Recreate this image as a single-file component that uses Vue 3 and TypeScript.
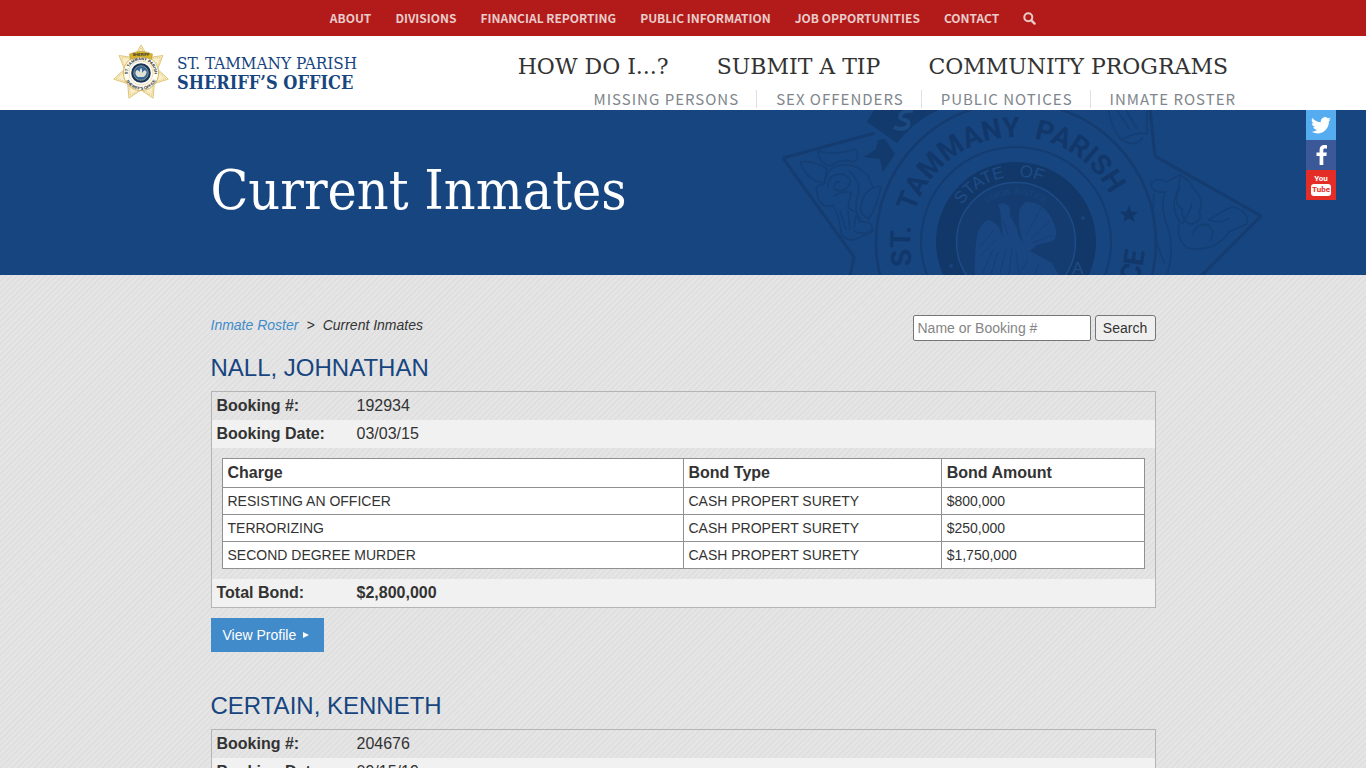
<script setup lang="ts">
interface Charge {
  name: string
  bondType: string
  amount: string
}

interface Inmate {
  name: string
  booking: string
  date: string
  charges: Charge[]
  total: string
}

const topLinks: string[] = [
  'About',
  'Divisions',
  'Financial Reporting',
  'Public Information',
  'Job Opportunities',
  'Contact',
]
const mainLinks: string[] = ['How Do I...?', 'Submit a Tip', 'Community Programs']
const subLinks: string[] = ['Missing Persons', 'Sex Offenders', 'Public Notices', 'Inmate Roster']

const bondType = 'CASH PROPERT SURETY'
const inmates: Inmate[] = [
  {
    name: 'NALL, JOHNATHAN',
    booking: '192934',
    date: '03/03/15',
    charges: [
      { name: 'RESISTING AN OFFICER', bondType, amount: '$800,000' },
      { name: 'TERRORIZING', bondType, amount: '$250,000' },
      { name: 'SECOND DEGREE MURDER', bondType, amount: '$1,750,000' },
    ],
    total: '$2,800,000',
  },
  {
    name: 'CERTAIN, KENNETH',
    booking: '204676',
    date: '09/15/19',
    charges: [],
    total: '',
  },
]

// Outline of the seven-pointed badge, centred on the origin
function starPoints(outer: number, inner: number): string {
  const points: string[] = []
  for (let i = 0; i < 14; i++) {
    const r = i % 2 === 0 ? outer : inner
    const a = (Math.PI * i) / 7 - Math.PI / 2
    points.push(`${(r * Math.cos(a)).toFixed(1)},${(r * Math.sin(a)).toFixed(1)}`)
  }
  return points.join(' ')
}
</script>

<template>
  <nav class="topbar" aria-label="Utility">
    <a v-for="link in topLinks" :key="link" href="#">{{ link }}</a>
    <a href="#" aria-label="Search the site">
      <svg width="13" height="13" viewBox="0 0 13 13" aria-hidden="true">
        <circle cx="5.3" cy="5.3" r="4" fill="none" stroke="currentColor" stroke-width="2" />
        <path d="M8.3 8.3 11.6 11.6" stroke="currentColor" stroke-width="2.4" stroke-linecap="round" />
      </svg>
    </a>
  </nav>

  <header class="masthead">
    <div class="masthead-inner">
      <a class="logo" href="#">
        <svg class="badge" width="56" height="56" viewBox="-28 -28 56 56" aria-hidden="true">
          <defs>
            <path id="badge-top" d="M-12.6 5 A13.4 13.4 0 1 1 12.6 5" />
            <path id="badge-bottom" d="M-14.5 8.5 A16.8 16.8 0 0 0 14.5 8.5" />
          </defs>
          <polygon :points="starPoints(28, 17)" fill="#f8eecb" stroke="#e0c77c" stroke-width="1" />
          <polygon :points="starPoints(25, 16)" fill="none" stroke="#e6d08a" stroke-width="1.4" stroke-dasharray="1 1" />
          <circle r="17.6" fill="#fffdf4" stroke="#d5b95f" stroke-width="1" />
          <circle r="12" fill="none" stroke="#dcc890" stroke-width=".6" />
          <circle r="9.8" fill="#17345c" />
          <circle r="7.3" fill="#35669a" stroke="#c8b878" stroke-width=".6" />
          <path d="M-5.5-1 Q-4-5-1.2-1 Q-1-5 .4-5 Q1.6-3 1 0 Q4-5 5.6-1 Q5 3 2.5 4 H-3 Q-6 2-5.5-1Z" fill="#dfe3d6" />
          <text class="badge-ring"><textPath href="#badge-top" startOffset="50%" text-anchor="middle">ST. TAMMANY PARISH</textPath></text>
          <text class="badge-ring"><textPath href="#badge-bottom" startOffset="50%" text-anchor="middle">SHERIFF'S OFFICE</textPath></text>
          <path d="M-11.5-19 Q0-24 11.5-19 L10.5-13.5 Q0-18.5-10.5-13.5Z" fill="#d9b429" stroke="#a98b2b" stroke-width=".5" />
          <text class="badge-banner" x="0" y="-16.8" text-anchor="middle">SHERIFF</text>
        </svg>
        <span class="logo-text">
          <span>ST. TAMMANY PARISH</span>
          <strong>SHERIFF’S OFFICE</strong>
        </span>
      </a>
      <div class="navs">
        <nav class="main-nav" aria-label="Main">
          <a v-for="link in mainLinks" :key="link" href="#">{{ link }}</a>
        </nav>
        <nav class="sub-nav" aria-label="Secondary">
          <a v-for="link in subLinks" :key="link" href="#">{{ link }}</a>
        </nav>
      </div>
    </div>
  </header>

  <section class="hero">
    <svg class="seal" width="480" height="165" viewBox="782 110 480 165" aria-hidden="true">
      <defs>
        <path id="seal-name" d="M913 268 A106 106 0 1 1 1119 268" />
        <path id="seal-office" d="M1090 347 A129 129 0 0 0 1145 242 V200" />
        <path id="seal-state" d="M950.5 242 A65.5 65.5 0 0 1 1081.5 242" />
        <path id="seal-motto" d="M968 242 A48 48 0 0 1 1064 242" />
      </defs>
      <g fill="none" stroke="#143c71" stroke-width="3">
        <path d="M875 133 783 158 854 257 850 276" />
        <path d="M1150 109 1155 156 1261 216 1201 276" />
        <circle cx="1016" cy="242" r="140" stroke-width="2.5" />
        <circle cx="1016" cy="242" r="95" stroke-width="2" />
      </g>
      <path d="M867 122 874 110H938Q914 121 897 143Z" fill="#133a6d" />
      <path d="M878 140 885 139 895 154 883 172 880 159 864 157 876 149Z" fill="#133a6d" />
      <path d="M913 111Q905 110 901 114Q898 119 905 120Q911 122 907 127Q901 131 894 127" fill="none" stroke="#1c4a82" stroke-width="4" />
      <g fill="none" stroke="#143e74" stroke-width="1.6">
        <path d="M818 151Q835 156 855 149Q861 156 854 162Q840 158 831 166Q818 163 818 151" />
        <path d="M800 162Q815 160 827 169L824 183Q807 181 800 162" />
        <path d="M825 184Q825 169 840 165Q857 163 868 176L873 187" />
        <path d="M828 188Q828 173 842 174Q854 178 848 187Q840 194 834 188Q834 181 840 182" />
        <path d="M849 171Q863 183 857 198Q854 208 860 223" />
        <path d="M824 185Q814 184 817 193Q820 210 833 205L838 216 842 236Q852 243 860 237L874 231" />
        <path d="M834 196Q844 190 851 193L848 208 857 213 862 222Q873 221 872 230Q862 236 854 231" />
        <path d="M881 186Q865 188 862 202Q857 213 869 219Q877 207 881 186" />
        <path d="M840 210 846 230M848 211 850 230M856 215 854 229" />
        <path d="M1152 182Q1159 177 1166 182L1180 175Q1190 180 1193 188Q1206 201 1199 211Q1204 222 1190 224Q1181 220 1182 209Q1174 204 1178 192L1180 177" />
        <path d="M1152 182Q1149 193 1165 192Q1159 207 1169 231Q1174 252 1167 276" />
        <path d="M1180 187Q1168 205 1180 222Q1175 237 1187 248Q1215 253 1229 232L1247 224Q1249 210 1232 207Q1222 211 1209 220Q1222 224 1229 218" />
        <path d="M1192 235Q1197 222 1208 225Q1216 231 1210 241M1182 224Q1190 212 1192 203M1154 194Q1150 235 1165 263" />
        <path d="M1108 110Q1113 130 1121 140Q1136 131 1147 134V110M1121 139Q1135 149 1143 137M1117 110 1130 130M1126 110 1137 129" />
      </g>
      <text class="seal-name"><textPath href="#seal-name" startOffset="3">ST.&#160;&#160;TAMMANY&#160;&#160;PARISH</textPath></text>
      <text class="seal-name"><textPath href="#seal-office" startOffset="80">CE</textPath></text>
      <path d="M1129 205 1131.4 211.5 1138 212 1133 216.2 1134.6 222 1129 218.5 1123.4 222 1125 216.2 1120 212 1126.6 211.5Z" fill="#12376a" />
      <circle cx="1016" cy="242" r="80" fill="#12386a" />
      <circle cx="1016" cy="242" r="59.5" fill="#143c71" stroke="#1e4c86" stroke-width="1.5" />
      <text class="seal-state"><textPath href="#seal-state" startOffset="41%" text-anchor="middle">STATE&#160;&#160;&#160;OF</textPath></text>
      <text class="seal-motto"><textPath href="#seal-motto" startOffset="50%" text-anchor="middle">UNION JUSTICE</textPath></text>
      <g fill="#194680">
        <circle cx="951" cy="266" r="2" />
        <circle cx="1083" cy="218" r="2" />
        <path d="M975 275Q973 224 988 220Q998 221 1003 238L1000 209Q996 203 1003 203Q1012 205 1010 216Q1018 228 1018 235L1023 243Q1013 208 1026 202Q1040 201 1049 214Q1061 233 1053 241L1037 245 1030 251 1052 263 1059 275H982Z" />
      </g>
      <path d="M982 274 993 250M991 274 998 252M1000 274 1006 249M1009 274 1012 248M1019 274 1016 251M1026 235 1041 208M1031 239 1050 221M1032 243 1053 235M980 246 994 230M980 256 997 239M1022 270 1028 260M1035 274 1039 263M1003 219 1008 235" stroke="#153f75" stroke-width="1" />
      <text class="seal-state" x="1072" y="274">A</text>
    </svg>
    <div class="container">
      <h1>Current Inmates</h1>
    </div>
  </section>

  <aside class="social" aria-label="Social media">
    <a class="twitter" href="#" aria-label="Twitter">
      <svg width="20" height="17" viewBox="0 0 24 20" aria-hidden="true">
        <path fill="#fff" d="M24 2.4c-.9.4-1.8.7-2.8.8 1-.6 1.8-1.6 2.2-2.7-1 .6-2 1-3.1 1.2A4.9 4.9 0 0 0 11.9 6.2C7.8 6 4.1 4 1.7.9a4.9 4.9 0 0 0 1.5 6.6c-.8 0-1.6-.2-2.2-.6v.1c0 2.4 1.7 4.4 3.9 4.8-.7.2-1.5.2-2.2.1.6 2 2.4 3.4 4.6 3.4A9.9 9.9 0 0 1 0 17.3 13.9 13.9 0 0 0 7.5 19.5c9.1 0 14.3-7.7 14-14.6 1-.7 1.8-1.6 2.5-2.5z" />
      </svg>
    </a>
    <a class="facebook" href="#" aria-label="Facebook">
      <svg width="11" height="20" viewBox="0 0 11 20" aria-hidden="true">
        <path fill="#fff" d="M11 .2V3.4H9.1C7.6 3.4 7.3 4.1 7.3 5.1V7.4H10.8L10.4 11H7.3V20H3.6V11H.5V7.4H3.6V4.7C3.6 1.7 5.5 0 8.2 0 9.5 0 10.6.1 11 .2Z" />
      </svg>
    </a>
    <a class="youtube" href="#" aria-label="YouTube">
      <span>You</span>
      <span class="tube">Tube</span>
    </a>
  </aside>

  <main class="container content">
    <div class="toolbar">
      <nav class="crumbs" aria-label="Breadcrumb">
        <a href="#">Inmate Roster</a><span>&gt;</span><span>Current Inmates</span>
      </nav>
      <form class="search" @submit.prevent>
        <input type="text" aria-label="Name or Booking #" placeholder="Name or Booking #" />
        <button type="submit">Search</button>
      </form>
    </div>

    <article v-for="inmate in inmates" :key="inmate.booking" class="record">
      <h2>{{ inmate.name }}</h2>
      <table class="details">
        <tbody>
          <tr>
            <th scope="row">Booking #:</th>
            <td>{{ inmate.booking }}</td>
          </tr>
          <tr class="light">
            <th scope="row">Booking Date:</th>
            <td>{{ inmate.date }}</td>
          </tr>
          <tr v-if="inmate.charges.length">
            <td colspan="2" class="charges-cell">
              <table class="charges">
                <thead>
                  <tr>
                    <th scope="col" class="col-charge">Charge</th>
                    <th scope="col" class="col-type">Bond Type</th>
                    <th scope="col">Bond Amount</th>
                  </tr>
                </thead>
                <tbody>
                  <tr v-for="charge in inmate.charges" :key="charge.name">
                    <td>{{ charge.name }}</td>
                    <td>{{ charge.bondType }}</td>
                    <td>{{ charge.amount }}</td>
                  </tr>
                </tbody>
              </table>
            </td>
          </tr>
          <tr v-if="inmate.total" class="light total">
            <th scope="row">Total Bond:</th>
            <td>{{ inmate.total }}</td>
          </tr>
        </tbody>
      </table>
      <a class="profile" href="#">View Profile
        <svg width="6" height="6" viewBox="0 0 6 6" aria-hidden="true"><path d="M0 0 6 3 0 6Z" fill="#fff" /></svg>
      </a>
    </article>
  </main>
</template>

<style>
body {
  margin: 0;
  color: #333;
  font-family: "Liberation Sans", Arial, sans-serif;
  background-color: #e1e1e1;
  background-image: repeating-linear-gradient(135deg, #e5e5e5 0, #e5e5e5 2px, #dedede 3px, #dedede 4px);
}
</style>

<style scoped>
a {
  text-decoration: none;
}

.container {
  max-width: 945px;
  margin: 0 auto;
}

.topbar {
  display: flex;
  justify-content: center;
  align-items: center;
  gap: 24px;
  height: 36px;
  background: #b31b1a;
  font: 700 12px/18px "Noto Sans CJK SC", sans-serif;
  text-transform: uppercase;
}

.topbar a {
  color: #e9cbc9;
}

.topbar svg {
  display: block;
}

.masthead {
  background: #fff;
}

.masthead-inner {
  display: flex;
  justify-content: space-between;
  max-width: 1140px;
  height: 74px;
  margin: 0 auto;
}

.logo {
  display: flex;
  align-items: center;
  gap: 8px;
  color: #17457f;
}

.badge-ring {
  font: 700 4px "Liberation Sans", sans-serif;
  fill: #222;
}

.badge-banner {
  font: 700 4px "Liberation Sans", sans-serif;
  fill: #333;
}

.logo-text {
  display: flex;
  flex-direction: column;
  font: 17px/19px "DejaVu Serif Condensed", "DejaVu Serif", serif;
  white-space: nowrap;
}

.logo-text strong {
  font-size: 18px;
}

.navs {
  display: flex;
  flex-direction: column;
  align-items: flex-end;
  padding-top: 15px;
}

.main-nav {
  display: flex;
  gap: 48px;
  margin-right: 25px;
  font: 22px/32px "DejaVu Serif", serif;
  text-transform: uppercase;
  white-space: nowrap;
}

.main-nav a {
  color: #333;
}

.sub-nav {
  display: flex;
  margin-top: 7px;
  font: 15px/18px "Noto Sans CJK SC", sans-serif;
  letter-spacing: 1px;
  text-transform: uppercase;
  white-space: nowrap;
}

.sub-nav a {
  padding: 0 17px 0 19px;
  color: #80868c;
}

.sub-nav a + a {
  border-left: 1px solid #e0e0e0;
}

.hero {
  position: relative;
  overflow: hidden;
  background: #17457f;
}

.seal {
  position: absolute;
  top: 0;
  left: calc(50% + 99px);
}

.seal-name {
  font: 700 28px Roboto, "Liberation Sans", sans-serif;
  fill: #12376a;
}

.seal-state {
  font: 17px "Liberation Sans", sans-serif;
  fill: #1e4c86;
}

.seal-motto {
  font: 8px "Liberation Sans", sans-serif;
  fill: #1a4780;
}

h1 {
  position: relative;
  margin: 0;
  padding: 50px 0 55px;
  color: #fff;
  font: 55px/60px "DejaVu Serif Condensed", "DejaVu Serif", serif;
}

.social {
  position: absolute;
  top: 110px;
  right: 30px;
}

.social a {
  display: flex;
  flex-direction: column;
  align-items: center;
  justify-content: center;
  width: 30px;
  height: 30px;
}

.twitter {
  background: #55acee;
}

.facebook {
  background: #3b5998;
}

.youtube {
  background: #e52d27;
  color: #fff;
  font: 700 8px/10px Roboto, "Liberation Sans", sans-serif;
}

.tube {
  padding: 1px;
  border-radius: 3px;
  background: #fff;
  color: #e52d27;
}

.content {
  padding: 40px 0;
}

.toolbar {
  display: flex;
  justify-content: space-between;
  margin-bottom: 14px;
}

.crumbs {
  display: flex;
  gap: 8px;
  font-size: 14px;
  font-style: italic;
  line-height: 20px;
}

.crumbs a {
  color: #428bca;
}

.search {
  display: flex;
  gap: 4px;
}

.search input,
.search button {
  box-sizing: border-box;
  height: 26px;
  margin: 0;
  border: 1px solid #767676;
  border-radius: 2px;
  color: #333;
  font: 14px "Liberation Sans", Arial, sans-serif;
}

.search input {
  width: 178px;
  padding: 1px 4px;
  background: #fff;
}

.search input::placeholder {
  color: #858585;
}

.search button {
  width: 61px;
  padding: 1px 6px;
  border-radius: 3px;
  background: #efefef;
}

.record {
  margin-bottom: 41px;
}

h2 {
  margin: 0 0 10px;
  color: #17457f;
  font-size: 24px;
  font-weight: 400;
  line-height: 26px;
}

.details {
  width: 100%;
  margin-bottom: 10px;
  border: 1px solid #b4b4b4;
  border-spacing: 0;
  font-size: 16px;
  line-height: 20px;
}

.details th,
.details td {
  padding: 4px 5px;
  text-align: left;
}

.details > tbody > tr > th {
  width: 130px;
}

.light {
  background: #f1f1f1;
}

.total td {
  font-weight: 700;
}

.details .charges-cell {
  padding: 10px;
}

.charges {
  width: 100%;
  border-collapse: collapse;
  background: #fff;
}

.charges th,
.charges td {
  border: 1px solid #909090;
}

.charges td {
  padding: 3px 5px;
  font-size: 14px;
}

.col-charge {
  width: 50%;
}

.col-type {
  width: 28%;
}

.profile {
  display: inline-flex;
  align-items: center;
  gap: 7px;
  padding: 7px 15px 7px 12px;
  background: #428bca;
  color: #fff;
  font-size: 14px;
  line-height: 20px;
}
</style>
